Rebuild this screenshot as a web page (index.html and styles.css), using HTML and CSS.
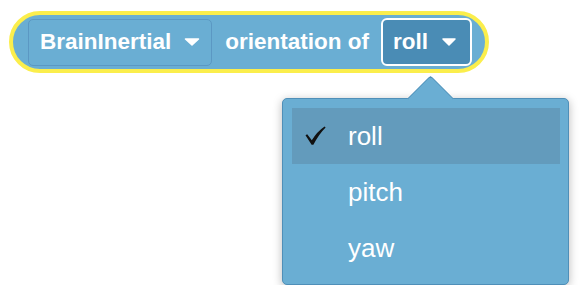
FILE: index.html
```html
<!DOCTYPE html>
<html lang="en">
  <head>
    <meta charset="utf-8" />
    <title>BrainInertial orientation block</title>
    <link rel="stylesheet" href="styles.css">
  </head>
  <body>
    <div class="stage">
      <div class="block">
        <div class="field">
          <span>BrainInertial</span>
          <svg class="caret" width="16" height="8" viewBox="0 0 16 8"><path d="M1.5 1 L14.5 1 L8 7 Z" /></svg>
        </div>
        <span class="label">orientation of</span>
        <div class="field field-active">
          <span>roll</span>
          <svg class="caret" width="14" height="8" viewBox="0 0 14 8"><path d="M1 1 L13 1 L7 7 Z" /></svg>
        </div>
      </div>

      <div class="menu">
        <div class="menu-arrow"></div>
        <div class="menu-item selected">
          <span class="check">
            <svg width="21" height="20" viewBox="0 0 21 20"><path d="M0.5 9.2 L2.2 8.2 L6.8 14.2 Q12 5.5 19.6 0.4 L20.6 1.4 Q13.5 8.5 8.4 18.8 L6.6 18.8 Z" /></svg>
          </span>
          <span>roll</span>
        </div>
        <div class="menu-item">
          <span class="check"></span>
          <span>pitch</span>
        </div>
        <div class="menu-item">
          <span class="check"></span>
          <span>yaw</span>
        </div>
      </div>
    </div>
  </body>
</html>
```

FILE: styles.css
```css
body {
  margin: 0;
  background-color: #fff;
  font-family: "Liberation Sans", Arial, sans-serif;
  color: white;
}
.stage {
  padding: 11px 0 0 9px;
}
.block {
  display: inline-flex;
  align-items: center;
  box-sizing: border-box;
  height: 62px;
  padding: 0 13px 0 15px;
  background-color: #6aaed3;
  border: 4px solid #fbee4c;
  border-radius: 31px;
  font-size: 22.5px;
  font-weight: bold;
}
.field {
  display: flex;
  align-items: center;
  gap: 13px;
  box-sizing: border-box;
  height: 47px;
  padding: 0 11px;
  border: 1px solid #5b98c3;
  border-radius: 5px;
}
.field-active {
  height: 48px;
  gap: 14px;
  padding: 0 14px 0 10px;
  background-color: #4a8cb5;
  border: 2px solid #fff;
  border-radius: 6px;
}
.caret path {
  fill: #fff;
  stroke: #fff;
  stroke-width: 1.5;
  stroke-linejoin: round;
}
.label {
  margin: 0 12px 0 13px;
}
.menu {
  position: relative;
  box-sizing: border-box;
  width: 287px;
  margin: 25px 0 0 273px;
  padding: 9px 8px 8px 9px;
  background-color: #6aaed3;
  border: 1px solid #4f8fb8;
  border-radius: 5px;
  box-shadow: 0 2px 10px rgba(0,0,0,0.28);
  font-size: 26px;
}
.menu-arrow {
  position: absolute;
  top: -17px;
  left: 131px;
  width: 32px;
  height: 32px;
  background-color: #6aaed3;
  border-top: 1px solid #4f8fb8;
  border-left: 1px solid #4f8fb8;
  border-top-left-radius: 4px;
  transform: rotate(45deg);
}
.menu-item {
  position: relative;
  display: flex;
  align-items: center;
  height: 56px;
}
.menu-item.selected {
  background-color: #639bbc;
}
.check {
  width: 56px;
  height: 20px;
  box-sizing: border-box;
  padding-left: 13px;
}
.check svg {
  display: block;
}
.check path {
  fill: #111;
}
```
